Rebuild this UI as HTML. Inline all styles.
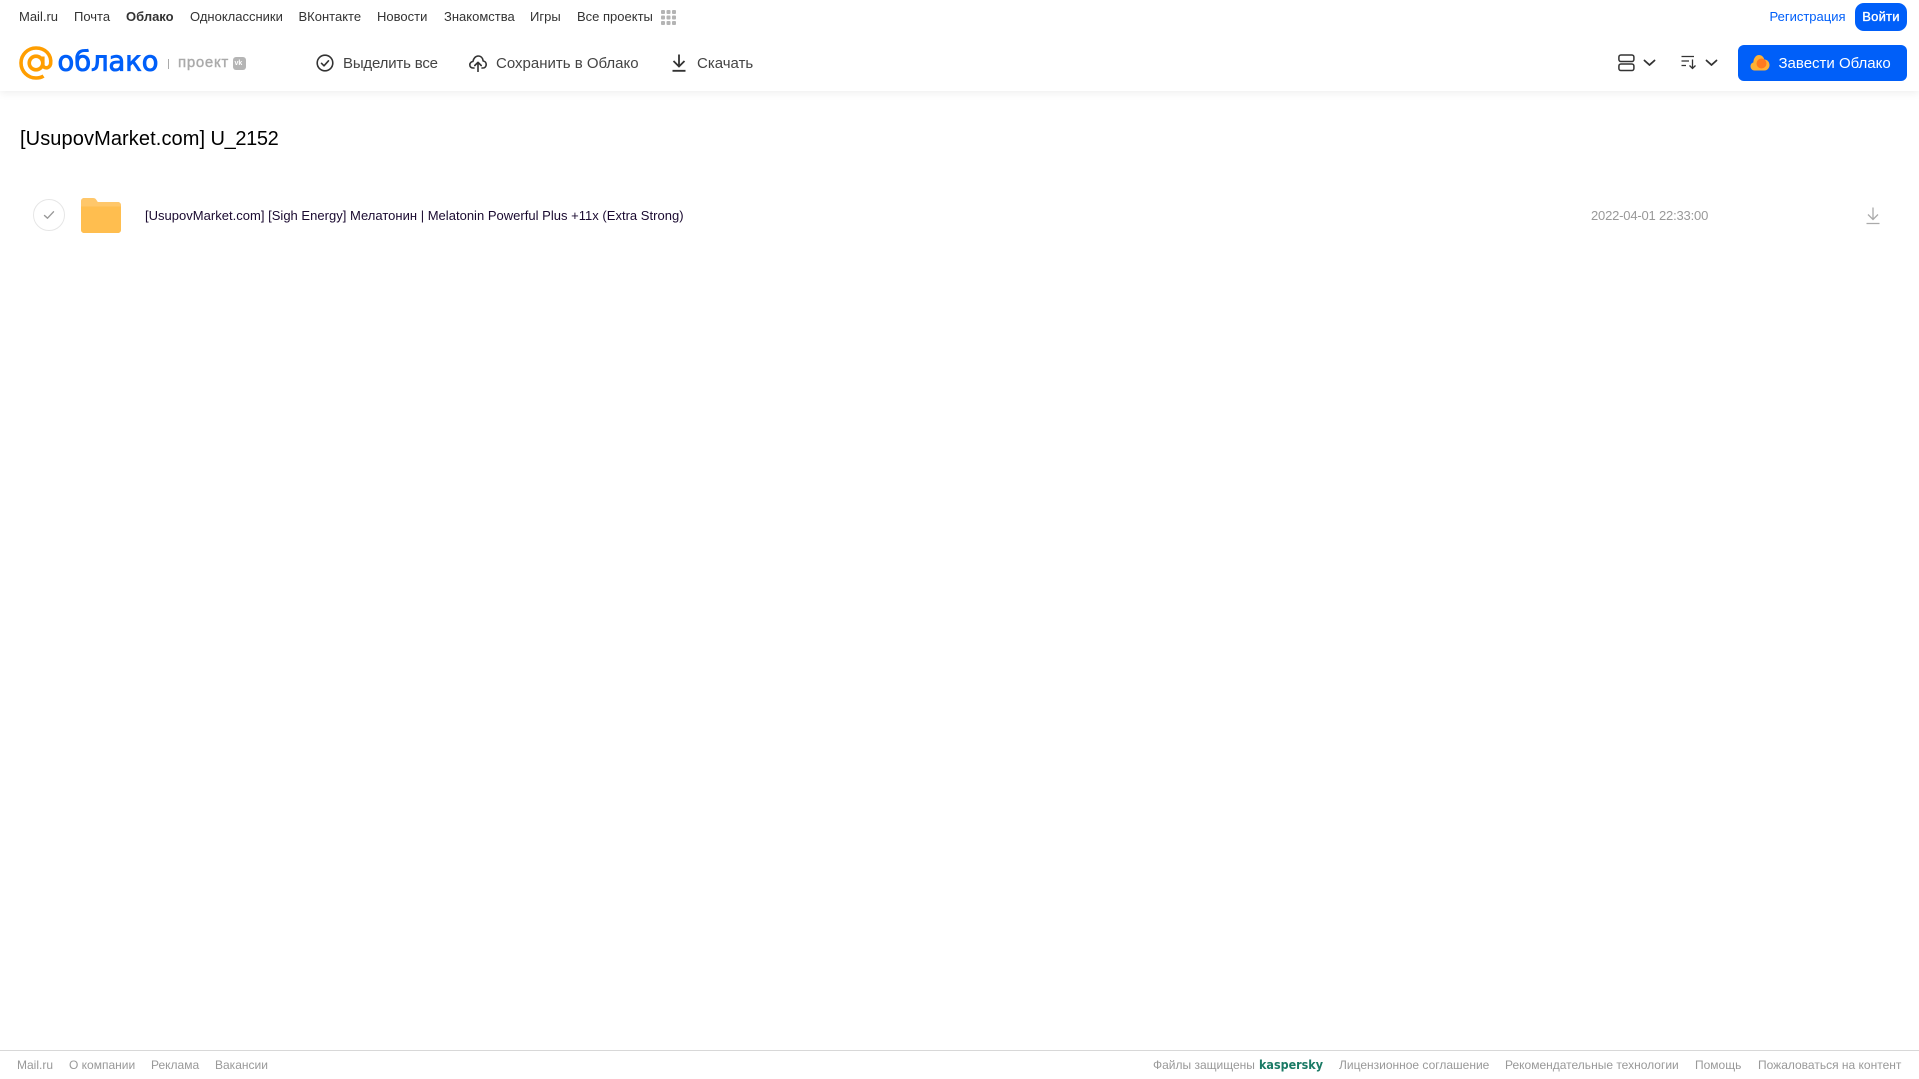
<!DOCTYPE html>
<html lang="ru">
<head>
<meta charset="utf-8">
<title>Облако</title>
<style>
html,body{margin:0;padding:0;background:#fff;}
body{width:1919px;height:1079px;position:relative;overflow:hidden;font-family:"Liberation Sans",Arial,sans-serif;}
.t{position:absolute;white-space:nowrap;}
.n{top:8px;font-size:13px;line-height:17px;color:#333;}
.b{top:54px;font-size:15px;line-height:20px;color:#444;}
.f{top:1057px;font-size:12px;line-height:16px;color:#999;}
svg{position:absolute;display:block;}
</style>
</head>
<body>
<div style="position:absolute;left:0;top:0;width:1919px;height:91px;background:#fff;box-shadow:0 2px 8px rgba(0,0,0,.07);"></div>

<span class="t n" style="left:19px">Mail.ru</span>
<span class="t n" style="left:74px">Почта</span>
<span class="t n" style="left:126px;font-weight:bold">Облако</span>
<span class="t n" style="left:190px">Одноклассники</span>
<span class="t n" style="left:298.500px">ВКонтакте</span>
<span class="t n" style="left:377px">Новости</span>
<span class="t n" style="left:444px">Знакомства</span>
<span class="t n" style="left:530px">Игры</span>
<span class="t n" style="left:577px">Все проекты</span>
<svg style="left:661px;top:10px" width="15" height="15" viewBox="0 0 15 15" fill="#b4b4b4">
<rect x="0" y="0" width="4" height="4" rx="1"/><rect x="5.500" y="0" width="4" height="4" rx="1"/><rect x="11" y="0" width="4" height="4" rx="1"/>
<rect x="0" y="5.500" width="4" height="4" rx="1"/><rect x="5.500" y="5.500" width="4" height="4" rx="1"/><rect x="11" y="5.500" width="4" height="4" rx="1"/>
<rect x="0" y="11" width="4" height="4" rx="1"/><rect x="5.500" y="11" width="4" height="4" rx="1"/><rect x="11" y="11" width="4" height="4" rx="1"/>
</svg>

<span class="t n" style="left:1769.500px;color:#005ff9">Регистрация</span>
<div class="t" style="left:1855px;top:3px;width:52px;height:28px;border-radius:9px;background:#005ff9;color:#fff;font-size:13px;line-height:28px;text-align:center;letter-spacing:.2px;-webkit-text-stroke:.35px #fff">Войти</div>

<!-- logo -->
<svg style="left:17.500px;top:45px" width="36" height="36" viewBox="0 0 36 36" fill="none" stroke="#ff9e00" stroke-width="3.600">
<circle cx="18" cy="18" r="6.800"/>
<path d="M24.800 11.500v8c0 4.500 6.700 4.500 7.800-.5C34 9.500 27 3 18 3 9.700 3 3 9.700 3 18s6.700 15 15 15c3 0 5.500-.6 7.500-2"/>
</svg>
<svg style="left:56px;top:42px" width="106" height="40" viewBox="0 0 106 40">
<text x="1.500" y="28.500" font-family="DejaVu Sans,sans-serif" font-size="28" fill="#005ff9" stroke="#005ff9" stroke-width=".9" textLength="101" lengthAdjust="spacingAndGlyphs">облако</text>
</svg>
<div style="position:absolute;left:168px;top:59px;width:1px;height:10px;background:#aaa"></div>
<span class="t" style="left:178px;top:53px;font-size:15px;line-height:20px;color:#aaa;letter-spacing:.7px;-webkit-text-stroke:.4px #aaa">проект</span>
<div style="position:absolute;left:233px;top:57px;width:13px;height:13px;border-radius:3px;background:#b5b5b5"></div>
<span class="t" style="left:234.500px;top:59px;font-size:7px;line-height:9px;color:#fff;font-weight:bold">vk</span>

<!-- toolbar -->
<svg style="left:316px;top:54px" width="18" height="18" viewBox="0 0 18 18" fill="none" stroke="#333" stroke-width="1.600">
<circle cx="9" cy="9" r="7.800"/><path d="M5.500 9.300l2.500 2.500 4.500-5" stroke-linecap="round" stroke-linejoin="round"/>
</svg>
<span class="t b" style="left:343px;letter-spacing:-.18px">Выделить все</span>

<svg style="left:469px;top:54px" width="18" height="18" viewBox="0 0 18 18" fill="none" stroke="#333" stroke-width="1.600" stroke-linecap="round" stroke-linejoin="round">
<path d="M5 14H4C2 14 .8 12.500 .8 10.800 .8 9 2.200 7.600 3.900 7.500 4.500 4.300 6.600 2 9.200 2c2.600 0 4.600 2 5 5 1.800.2 3 1.700 3 3.600 0 1.800-1.300 3.400-3.200 3.400H13"/>
<path d="M9 17.500V8.500M5.800 11.500L9 8.300l3.200 3.200"/>
</svg>
<span class="t b" style="left:496px">Сохранить в Облако</span>

<svg style="left:671px;top:54px" width="16" height="18" viewBox="0 0 16 18" fill="none" stroke="#333" stroke-width="1.800">
<path d="M8 0.500V12M2.500 7L8 12.500 13.500 7M1.500 16.800h13"/>
</svg>
<span class="t b" style="left:697px">Скачать</span>

<!-- view / sort -->
<svg style="left:1618px;top:54px" width="17" height="18" viewBox="0 0 17 18" fill="none" stroke="#333" stroke-width="1.500">
<rect x=".9" y="1" width="15" height="6.500" rx="2"/><rect x=".9" y="10" width="15" height="6.500" rx="2"/>
</svg>
<svg style="left:1643px;top:59px" width="13" height="8" viewBox="0 0 13 8" fill="none" stroke="#333" stroke-width="1.800" stroke-linecap="round" stroke-linejoin="round">
<path d="M1.500 1.500L6.500 6l5-4.500"/>
</svg>
<svg style="left:1680.500px;top:55px" width="17" height="15" viewBox="0 0 17 15" fill="none" stroke="#333" stroke-width="1.300">
<path d="M.5 1.500H13M.5 6H8M.5 10.500H5M11.500 4.500V13.500M8.500 10.500L11.500 13.500 14.500 10.500"/>
</svg>
<svg style="left:1705px;top:59px" width="13" height="8" viewBox="0 0 13 8" fill="none" stroke="#333" stroke-width="1.800" stroke-linecap="round" stroke-linejoin="round">
<path d="M1.500 1.500L6.500 6l5-4.500"/>
</svg>

<div style="position:absolute;left:1738px;top:45px;width:169px;height:36px;border-radius:6px;background:#005ff9"></div>
<svg style="left:1750px;top:54px" width="20" height="17" viewBox="0 0 20 17">
<path d="M4.500 16.500C2 16.500 .5 14.500 .5 12.300 .5 10.300 1.800 8.800 3.300 8.500 3.600 4 6 1 9 1c2.800 0 4.700 2 5.300 4.500 3.200 0 5.200 2.700 5.200 5.500 0 3-2.200 5.500-5 5.500z" fill="#ffb134"/>
<circle cx="11.500" cy="9.500" r="5" fill="#ff7a1f"/>
</svg>
<span class="t" style="left:1778.500px;top:54px;font-size:15px;line-height:20px;color:#fff">Завести Облако</span>

<!-- content -->
<span class="t" style="left:20px;top:126px;font-size:20px;line-height:26px;color:#000;letter-spacing:.1px">[UsupovMarket.com]</span>
<span class="t" style="left:210.500px;top:126px;font-size:20px;line-height:26px;color:#000;letter-spacing:-.35px">U_2152</span>

<div style="position:absolute;left:33px;top:199px;width:30px;height:30px;border:1px solid #e6e6e6;border-radius:50%"></div>
<svg style="left:43px;top:210px" width="12" height="10" viewBox="0 0 12 10" fill="none" stroke="#999" stroke-width="1.400" stroke-linecap="round" stroke-linejoin="round">
<path d="M1.500 5.500L4.500 8.200 10.500 1.800"/>
</svg>
<svg style="left:81px;top:198px" width="40" height="35" viewBox="0 0 40 35">
<path d="M0 3C0 1.300 1.300 0 3 0h9c1.500 0 2.500 .6 3.200 1.600L16.800 4H37c1.700 0 3 1.300 3 3v3H0z" fill="#ffc76a"/>
<path d="M0 8.500h40v23.500c0 1.700-1.300 3-3 3H3c-1.700 0-3-1.300-3-3z" fill="#ffbe4f"/>
</svg>

<span class="t" style="left:145px;top:207px;font-size:13px;line-height:17px;color:#1a0a30;letter-spacing:.015px">[UsupovMarket.com] [Sigh Energy] Мелатонин | Melatonin Powerful Plus +11x (Extra Strong)</span>
<span class="t" style="left:1591px;top:207px;font-size:13px;line-height:17px;color:#999;letter-spacing:-.19px">2022-04-01 22:33:00</span>
<svg style="left:1866px;top:207px" width="14" height="18" viewBox="0 0 14 18" fill="none" stroke="#aaa" stroke-width="1.300">
<path d="M7 .5V12M2 7.500L7 12.500l5-5M.5 16.500h13"/>
</svg>

<!-- footer -->
<div style="position:absolute;left:0;top:1050px;width:1919px;height:1px;background:#d8d8d8"></div>
<span class="t f" style="left:17px">Mail.ru</span>
<span class="t f" style="left:69px">О компании</span>
<span class="t f" style="left:151px">Реклама</span>
<span class="t f" style="left:215px">Вакансии</span>
<span class="t f" style="left:1153px">Файлы защищены</span>
<svg style="left:1258px;top:1056px" width="68" height="18" viewBox="0 0 68 18">
<text x="1" y="13" font-family="DejaVu Sans,sans-serif" font-weight="bold" font-size="12" fill="#1a7a65" textLength="64" lengthAdjust="spacingAndGlyphs">kaspersky</text>
</svg>
<span class="t f" style="left:1339px">Лицензионное соглашение</span>
<span class="t f" style="left:1505px">Рекомендательные технологии</span>
<span class="t f" style="left:1695px">Помощь</span>
<span class="t f" style="left:1758px">Пожаловаться на контент</span>
</body>
</html>
